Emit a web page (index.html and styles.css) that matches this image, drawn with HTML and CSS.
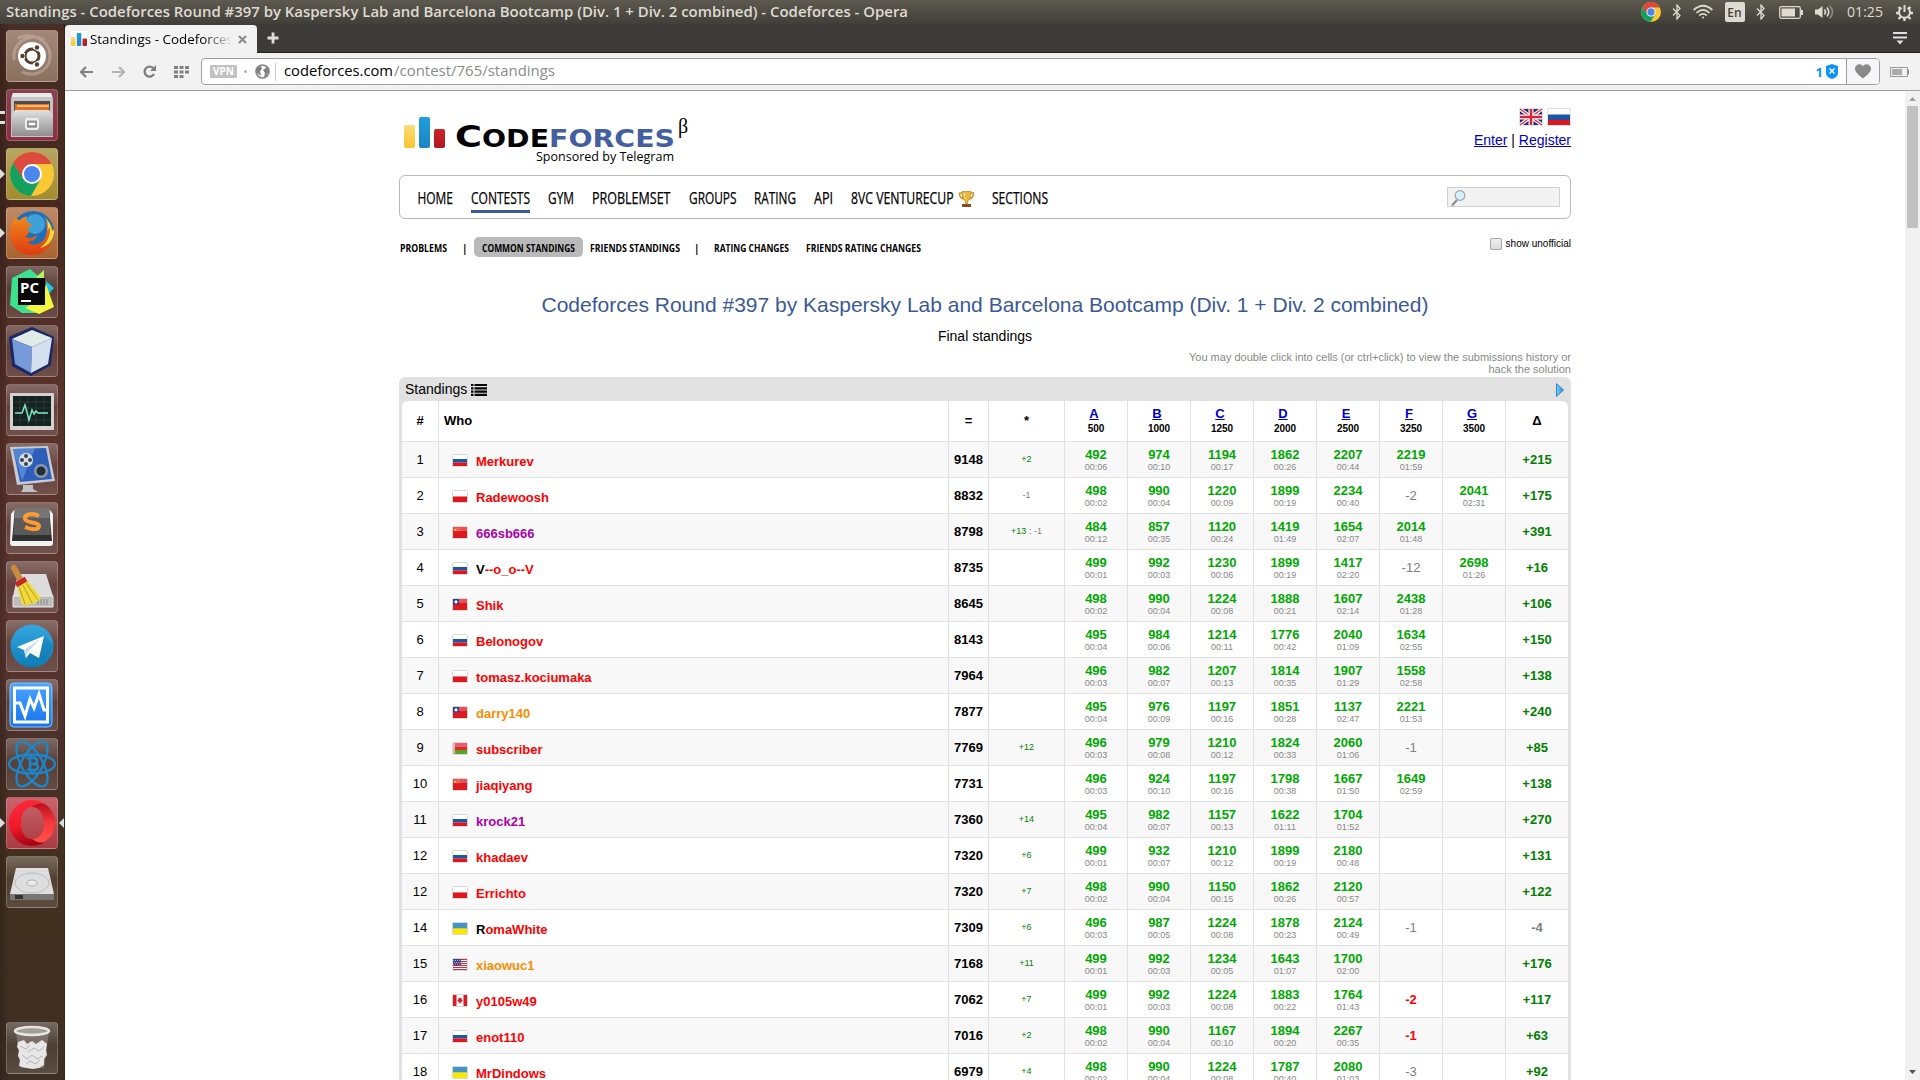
FILE: index.html
```html
<!DOCTYPE html>
<html lang="en">
<head>
<meta charset="utf-8">
<title>Standings - Codeforces</title>
<link rel="stylesheet" href="styles.css">
</head>
<body>
<svg class="defs" width="0" height="0">
  <defs>
    <linearGradient id="gy" x1="0" y1="0" x2="0" y2="1"><stop offset="0" stop-color="#fbdc78"/><stop offset="1" stop-color="#fbc42c"/></linearGradient>
    <linearGradient id="gb" x1="0" y1="0" x2="0" y2="1"><stop offset="0" stop-color="#209ddb"/><stop offset="1" stop-color="#1e85c4"/></linearGradient>
    <linearGradient id="gr" x1="0" y1="0" x2="0" y2="1"><stop offset="0" stop-color="#cb2229"/><stop offset="1" stop-color="#ae1a22"/></linearGradient>
    <linearGradient id="silver" x1="0" y1="0" x2="0" y2="1"><stop offset="0" stop-color="#e0e0e0"/><stop offset="1" stop-color="#8f8f8f"/></linearGradient>
    <linearGradient id="blue" x1="0" y1="0" x2="0" y2="1"><stop offset="0" stop-color="#36a8e0"/><stop offset="1" stop-color="#0a7db8"/></linearGradient>
    <linearGradient id="vm" x1="0" y1="0" x2="0" y2="1"><stop offset="0" stop-color="#4aa5ff"/><stop offset="1" stop-color="#1673ee"/></linearGradient>
    <linearGradient id="opera" x1="0" y1="0" x2=".3" y2="1"><stop offset="0" stop-color="#ff2b3c"/><stop offset=".6" stop-color="#ee1828"/><stop offset="1" stop-color="#a50514"/></linearGradient>
    <linearGradient id="opera2" x1="0" y1="0" x2="0" y2="1"><stop offset="0" stop-color="#b8101c"/><stop offset=".5" stop-color="#f53a3c"/><stop offset="1" stop-color="#ff5048"/></linearGradient>
    <linearGradient id="fox" x1="0" y1="0" x2="0" y2="1"><stop offset="0" stop-color="#f08a1c"/><stop offset="1" stop-color="#de3a12"/></linearGradient>
    <linearGradient id="arrow" x1="0" y1="0" x2="1" y2="0"><stop offset="0" stop-color="#7fd0f8"/><stop offset="1" stop-color="#1f86d8"/></linearGradient>
    <symbol id="f-ru" viewBox="0 0 14 11"><path fill="#fff" d="M0 0h14v4H0z"/><path fill="#1c57a5" d="M0 4h14v3.500H0z"/><path fill="#e0161c" d="M0 7.500h14V11H0z"/></symbol>
    <symbol id="f-pl" viewBox="0 0 14 11"><path fill="#fff" d="M0 0h14v5.500H0z"/><path fill="#e0161c" d="M0 5.500h14V11H0z"/></symbol>
    <symbol id="f-cn" viewBox="0 0 14 11"><path fill="#de1a20" d="M0 0h14v11H0z"/><path fill="#e8505a" d="M0 0h14v4H0z"/><path fill="#fc4" d="M2.500 1.200l.5 1.100 1.200.1-.9.8.3 1.200-1.100-.6-1.100.6.3-1.200-.9-.8 1.200-.1zM5 .8h1v1H5zM5.500 3h1v1h-1z"/></symbol>
    <symbol id="f-tw" viewBox="0 0 14 11"><path fill="#de1a20" d="M0 0h14v11H0z"/><path fill="#e8505a" d="M0 0h14v4H0z"/><path fill="#24409a" d="M0 0h6v5.500H0z"/><circle cx="3" cy="2.800" r="1.600" fill="#fff"/></symbol>
    <symbol id="f-by" viewBox="0 0 14 11"><path fill="#dc2a32" d="M0 0h14v7H0z"/><path fill="#e5606a" d="M0 0h14v4H0z"/><path fill="#5aa61c" d="M0 7h14v4H0z"/><path fill="#f0b0b0" d="M0 0h2v11H0z"/></symbol>
    <symbol id="f-ua" viewBox="0 0 14 11"><path fill="#3f95c6" d="M0 0h14v5.500H0z"/><path fill="#fbe600" d="M0 5.500h14V11H0z"/></symbol>
    <symbol id="f-us" viewBox="0 0 14 11"><path fill="#fff" d="M0 0h14v11H0z"/><path stroke="#d02a3c" d="M0 .5h14M0 2.500h14M0 4.500h14M0 6.500h14M0 8.500h14M0 10.500h14"/><path fill="#3a3f8c" d="M0 0h8v6H0z"/><path stroke="#aab" stroke-dasharray="1 1" d="M0 1.500h8M1 3.500h7M0 5h8"/></symbol>
    <symbol id="f-ca" viewBox="0 0 14 11"><path fill="#fff" d="M0 0h14v11H0z"/><path fill="#dc1a22" d="M0 0h3.500v11H0zM10.500 0H14v11h-3.500zM7 2l.8 1.500 1-.3-.2 1.500 1.400.2-1.500 1.600.2.900H5.300l.2-.9L4 4.900l1.400-.2-.2-1.500 1 .3zM6.700 7h.6v2h-.6z"/></symbol>
    <symbol id="bt" viewBox="0 0 10 16"><path d="M1 4.500l7 7L5 15V1l3 3.500-7 7" fill="none" stroke="#dfdbd2" stroke-width="1.300"/></symbol>
    <symbol id="chrome" viewBox="0 0 44 44"><circle cx="22" cy="22" r="22" fill="#fbc835"/><path fill="#dd4b3e" d="M3 11A22 22 0 0 1 41.100 11L41.500 12H22L12.500 27.500z"/><path fill="#16a05d" d="M3 11A22 22 0 0 0 21 44L30.700 27 22 32 13.300 27z"/><circle cx="22" cy="22" r="10" fill="#fff"/><circle cx="22" cy="22" r="8" fill="#4a86ee"/></symbol>
  </defs>
</svg>

<header class="panel">
  <svg class="panel-title" width="904" height="24"><text x="0" y="16.500" textLength="902" lengthAdjust="spacingAndGlyphs">Standings - Codeforces Round #397 by Kaspersky Lab and Barcelona Bootcamp (Div. 1 + Div. 2 combined) - Codeforces - Opera</text></svg>
  <div class="tray">
    <svg width="20" height="20"><use href="#chrome"/></svg>
    <svg class="t-bt" width="10" height="16"><use href="#bt"/></svg>
    <svg class="t-wifi" width="20" height="14" viewBox="0 0 20 14" fill="none" stroke="#dfdbd2" stroke-width="1.700"><path d="M.6 5Q10-3.500 19.400 5M3.500 7.800Q10 2 16.500 7.800M6.300 10.500Q10 7.200 13.700 10.500"/><circle cx="10" cy="12.400" r="1" fill="#dfdbd2" stroke="none"/></svg>
    <span class="lang">En</span>
    <svg class="t-bt2" width="10" height="16"><use href="#bt"/></svg>
    <svg class="t-bat" width="24" height="13" viewBox="0 0 24 13"><rect x=".7" y=".7" width="20.600" height="11.600" rx="1.500" fill="none" stroke="#dfdbd2" stroke-width="1.300"/><path fill="#dfdbd2" d="M2.500 2.500h13.500v8H2.500zM22 4h2v5h-2z"/></svg>
    <svg class="t-vol" width="20" height="16" viewBox="0 0 20 16"><path fill="#dfdbd2" d="M0 5.500h3L7.500 2v12L3 10.500H0z"/><path d="M9.500 5.500q2 2.500 0 5M12 3.500q3.500 4.500 0 9" fill="none" stroke="#dfdbd2" stroke-width="1.600"/><path d="M14.500 1.500q6 6.500 0 13" fill="none" stroke="#8a877f" stroke-width="1.600"/></svg>
    <svg class="t-clock" width="37" height="24"><text x="0" y="17" textLength="36" lengthAdjust="spacingAndGlyphs">01:25</text></svg>
    <svg class="t-gear" width="17" height="17" viewBox="0 0 17 17" fill="none" stroke="#dfdbd2"><path stroke-width="2" d="M5.500 3.700A5.500 5.500 0 1 0 11.500 3.700M8.500 1v7"/><path stroke-width="2.400" d="M0 9h3M14 9h3M8.500 14v3M2.500 3l2 2M14.500 3l-2 2M2.500 15l2-2M14.500 15l-2-2"/></svg>
  </div>
</header>

<div class="desktop">
  <nav class="launcher">
    <div class="tile ubuntu"><svg viewBox="0 0 52 52"><path d="M8 30C6 12 24 2 38 10M44 22c2 18-14 26-28 20M12 8c14-6 32 2 32 18" fill="none" stroke="#d8c8bc" stroke-width="3" opacity=".4"/><circle cx="26" cy="26" r="14" fill="#fff"/><circle cx="26" cy="26" r="7" fill="none" stroke="#54402f" stroke-width="3"/><path d="M19 26h-4M29.500 20l2-3.500M29.500 32l2 3.500" stroke="#fff" stroke-width="6"/><g fill="#54402f"><circle cx="16.500" cy="26" r="2.200"/><circle cx="31" cy="17.500" r="2.200"/><circle cx="31" cy="34.500" r="2.200"/></g></svg></div>
    <div class="tile files marks"><svg viewBox="0 0 52 52"><path fill="#c4c4c4" d="M7 4h38l2 6v38H5V10z"/><path fill="#e9e9e9" d="M7 4h38l1.500 4h-41z"/><path fill="#4b4b4b" d="M8 12h36v10H8z"/><path fill="#e2711d" d="M9 15h34v7H9z"/><path stroke="#f7d6a8" stroke-width="1.500" d="M11 17h32"/><path fill="url(#silver)" d="M9 21h34l4 5v21H6V26z"/><rect x="20" y="30" width="12" height="10" rx="2" fill="none" stroke="#eee" stroke-width="2"/><rect x="22" y="33" width="8" height="4" fill="#fff" stroke="#666"/></svg></div>
    <div class="tile chrome run"><svg viewBox="0 0 52 52"><use href="#chrome" x="4" y="4" width="44" height="44"/></svg></div>
    <div class="tile firefox run"><svg viewBox="0 0 52 52"><circle cx="27" cy="25" r="21" fill="#1f6fb5"/><circle cx="29" cy="17" r="10" fill="#3ea1d8"/><path fill="url(#fox)" d="M4 27C4 18 7 14 9 10c1 2 3 3 5 3 2-2 4-3 7-4-1 3-1 5 1 7l4 1c-1 3-4 3-5 6 4-1 3 5-2 6 4 4 9 1 12-1-1 5-6 7-10 7 6 5 17 2 19-7 2-5 1-11-1-14 4 3 6 7 6 10l2-2c2 15-8 26-21 26C13 48 4 39 4 27z"/><path fill="#ffd83b" d="M38 10c4 4 5 9 3 14l3-4c1 9-4 17-10 21 10-2 15-11 14-19-1 2-1 2-2 2 0-6-4-11-8-14z"/></svg></div>
    <div class="tile plain"><svg viewBox="0 0 52 52"><path fill="#3ce08e" d="M6 12l18-9 14 12-8 32H16L4 39z"/><path fill="#b5f55a" d="M38 4l-12 11 12 10z"/><path fill="#1cc4e8" d="M40 15l8 7-8 9z"/><path fill="#f3f83c" d="M40 18l8 23-15 7-14-6 18-12z"/><rect x="12" y="12" width="27" height="27" fill="#090909"/><text x="14" y="27" class="pc">PC</text><path fill="#fff" d="M15 34h10v2H15z"/></svg></div>
    <div class="tile plain"><svg viewBox="0 0 52 52"><path fill="#1c2868" stroke="#1c2868" stroke-width="4" stroke-linejoin="round" d="M26 4l20 9-3 26-18 10L8 40 5 13z"/><path fill="#e0ebe8" d="M26 5l20 8-20 9L6 14z"/><path fill="#779bd8" d="M6 14l20 8-1 26-16-9z"/><path fill="#d5e0ee" d="M46 13l-20 9-1 26 17-9z"/></svg></div>
    <div class="tile plain"><svg viewBox="0 0 52 52"><rect x="4" y="9" width="44" height="37" rx="1" fill="#d2d2d0"/><rect x="7" y="12" width="38" height="30" fill="#15221f"/><path stroke="#3a4a46" stroke-width=".6" d="M7 18h38M7 24h38M7 36h38M14 12v30M22 12v30M30 12v30M38 12v30"/><path d="M9 29h7l3-8 4 15 3-10 2 4 2-3 2 2h10" fill="none" stroke="#7fe8c4" stroke-width="1.500"/></svg></div>
    <div class="tile plain"><svg viewBox="0 0 52 52"><path fill="#c8ccd2" d="M4 4l38 -1 7 35-38 4z"/><path fill="#2d5fba" d="M7 6l33 -1 6 31-32 3z"/><path fill="#6ba0e8" d="M7 6l22-1-13 33z" opacity=".6"/><circle cx="20" cy="17" r="7" fill="#d9dde2"/><g fill="#374450"><circle cx="20" cy="13" r="2"/><circle cx="16" cy="17" r="2"/><circle cx="24" cy="17" r="2"/><circle cx="20" cy="21" r="2"/></g><circle cx="35" cy="28" r="7" fill="#8b98a8"/><circle cx="35" cy="28" r="4.500" fill="#222e38"/><path fill="#bfc1c2" d="M17 42h10v4l5 3H15l2-3z"/></svg></div>
    <div class="tile plain"><svg viewBox="0 0 52 52"><path fill="#f1f1f1" d="M5 12L8 8h36l3 4v29q0 3-3 3H7q-3 0-3-3z"/><path fill="#303030" d="M9 6h34l3 33H6z"/><path fill="#5a5a5a" d="M9 6h34l1.500 27H7.500z"/><path fill="#757575" d="M9 6h34l.6 10H8.400z"/><path d="M33 14C25 10 18 13 19 17S33 20 33 24 26 28 19 25" fill="none" stroke="#ff9a30" stroke-width="4"/></svg></div>
    <div class="tile plain"><svg viewBox="0 0 52 52"><path fill="#dcdcdc" d="M12 13h28l7 22H7z"/><path fill="#bdbdbd" stroke="#eee" d="M7 35h40v11H7z"/><path stroke="#888" stroke-width="1" d="M32 38v6M35 38v6M38 38v6M41 38v6"/><path stroke="#c88a3c" stroke-width="6" stroke-linecap="round" d="M8 7l6 11"/><path fill="#f0d93a" d="M11 24l10-5 14 18c-4 5-11 7-19 7z"/><path stroke="#b79a1c" d="M13 26l6 17M17 24l9 18M20 22l12 17"/><path stroke="#c3262b" stroke-width="5" d="M10 24l10-6"/></svg></div>
    <div class="tile plain"><svg viewBox="0 0 52 52"><circle cx="26" cy="26" r="21.500" fill="url(#blue)"/><path fill="#0d6fa3" opacity=".35" d="M38 16l10 10-9 16-17-4z"/><path fill="#fff" d="M11 27l27-11-5 22-9-5-4 5-2-8z"/><path fill="#c5dcea" d="M18 30l16-11-12 13-2 6z"/></svg></div>
    <div class="tile plain"><svg viewBox="0 0 52 52"><rect x="4" y="4" width="42" height="44" rx="4" fill="url(#vm)" stroke="#7ec2ff"/><path d="M8.500 9h33v34h-33z" fill="none" stroke="#fff" stroke-width="3"/><path d="M8 24h6l5 13 5-17 4 9 5-14 5 16h5" fill="none" stroke="#fff" stroke-width="3"/></svg></div>
    <div class="tile dark"><svg viewBox="0 0 52 52" fill="none" stroke="#1c86cc" stroke-width="2.300"><ellipse cx="26" cy="26" rx="23" ry="9.500"/><ellipse cx="26" cy="26" rx="25" ry="10.500" transform="rotate(60 26 26)"/><ellipse cx="26" cy="26" rx="25" ry="10.500" transform="rotate(120 26 26)"/><path stroke-width="2.500" d="M20.500 20h7q3.500 0 3.500 3t-3.500 3H24h4q4 0 4 3t-4 3h-7.500M24 20v12M25 17v3M28 17v3M25 32v3M28 32v3"/></svg></div>
    <div class="tile operat run active"><svg viewBox="0 0 52 52"><path fill="url(#opera)" fill-rule="evenodd" d="M26 3a23 23 0 1 0 0 46 23 23 0 1 0 0-46zM26 10c7 0 12 7 12 16s-5 16-12 16-11-7-11-16 4-16 11-16z"/><path fill="url(#opera2)" d="M26 10c4-4 10-4 14-2 5 4 9 11 9 18s-3 14-9 18c-5 3-10 1-14-2 7 0 12-7 12-16s-5-16-12-16z"/></svg></div>
    <div class="tile dark"><svg viewBox="0 0 52 52"><path fill="#dedede" d="M10 12h32l6 26H4z"/><path fill="#777" d="M4 38h44v6H4z"/><path fill="#333" d="M9 39h8v4H9z"/><ellipse cx="26" cy="27" rx="17" ry="10" fill="none" stroke="#bcbcbc"/><ellipse cx="26" cy="27" rx="5" ry="3" fill="#ececec" stroke="#aaa"/></svg></div>
    <div class="tile dark trash"><svg viewBox="0 0 52 52"><path fill="#a09890" opacity=".5" d="M10 10h33l-5 36H15z"/><path fill="#e6e6e6" d="M12 20l6-2 3 4 5-3 4 3 6-4 5 4-1 6 1 5-3 4v6l-5 3-6 1-7-1-7-2 1-6-2-4 1-6-2-3z"/><path stroke="#b4b4b4" fill="none" d="M14 24l6 3 4-4M22 30l6-4 5 3 5-4M16 33l5 4 5-4 5 4 6-3M20 42l4-3 6 3 4-4"/><ellipse cx="26" cy="9" rx="17" ry="4" fill="#a39e98" stroke="#e6e6e6" stroke-width="2.500"/></svg></div>
  </nav>

  <div class="browser">
    <div class="tabs">
      <div class="tab">
        <svg width="16" height="16" viewBox="0 0 16 16"><path fill="#fff" d="M0 0h16v16H0z"/><rect x="0" y="6" width="4.500" height="9" rx="1" fill="url(#gy)"/><rect x="5.800" y="2" width="4.500" height="13" rx="1" fill="url(#gb)"/><rect x="11.500" y="7.500" width="4.500" height="7.500" rx="1" fill="url(#gr)"/></svg>
        <svg class="tab-text" width="141" height="22"><text x="0" y="16" textLength="143" lengthAdjust="spacingAndGlyphs">Standings - Codeforces</text></svg>
        <svg class="x" width="9" height="9" viewBox="0 0 9 9"><path d="M1 1l7 7M8 1L1 8" stroke="#8c8c8c" stroke-width="2.200"/></svg>
      </div>
      <svg class="plus" width="12" height="12" viewBox="0 0 12 12"><path d="M6 .5v11M.5 6h11" stroke="#dfdfdf" stroke-width="2.800"/></svg>
      <svg class="tabmenu" width="14" height="13" viewBox="0 0 14 13"><path fill="#e0e0e0" d="M0 0h14v2H0zM0 4.500h14v2H0zM3.500 8.500h7L7 12.500z"/></svg>
    </div>
    <div class="toolbar">
      <svg class="nav-ic" width="15" height="12" viewBox="0 0 15 12"><path d="M14 6H3M7 1L2 6l5 5" fill="none" stroke="#808080" stroke-width="2.200"/></svg>
      <svg class="nav-ic fwd" width="15" height="12" viewBox="0 0 15 12"><path d="M1 6h11M8 1l5 5-5 5" fill="none" stroke="#b5b5b5" stroke-width="2.200"/></svg>
      <svg class="nav-ic" width="15" height="14" viewBox="0 0 15 14"><path d="M11.300 3.200A5 5 0 1 0 12 9" fill="none" stroke="#808080" stroke-width="2.400"/><path d="M14 0v6H8z" fill="#808080"/></svg>
      <svg class="nav-ic grid" width="15" height="12" viewBox="0 0 15 12"><path fill="#808080" d="M0 0h4v3H0zM5.500 0h4v3h-4zM11 0h4v3h-4zM0 4.500h4v3H0zM5.500 4.500h4v3h-4zM11 4.500h4v3h-4zM0 9h4v3H0zM5.500 9h4v3h-4z"/></svg>
      <div class="address">
        <span class="vpn">VPN</span><span class="dot"></span>
        <svg width="15" height="15" viewBox="0 0 15 15"><circle cx="7.500" cy="7.500" r="6.500" fill="none" stroke="#808080" stroke-width="1.600"/><path fill="#808080" d="M2 4l4-2 1 3-2 2 1 5-4-3zM8 6l4-3 2 4-3 5-2 1 1-4z"/></svg>
        <span class="sep"></span>
        <svg class="url" width="272" height="24"><text x="0" y="16" textLength="109" lengthAdjust="spacingAndGlyphs" class="host">codeforces.com</text><text x="110" y="16" textLength="161" lengthAdjust="spacingAndGlyphs">/contest/765/standings</text></svg>
        <span class="one">1</span>
        <svg class="shield" width="12" height="15" viewBox="0 0 12 15"><path fill="#0a93fa" d="M6 0l6 2v7q0 4-6 6-6-2-6-6V2z"/><path d="M3.500 4.500l5 5M8.500 4.500l-5 5" stroke="#fff" stroke-width="1.500"/></svg>
        <span class="heart"><svg width="16" height="15" viewBox="0 0 16 15"><path fill="#8a8a8a" d="M8 14.500C2 10 0 7.500 0 4.300 0 .5 5.500-1.500 8 2.200 10.500-1.500 16 .5 16 4.300 16 7.500 14 10 8 14.500z"/></svg></span>
      </div>
      <svg class="batt" width="19" height="10" viewBox="0 0 19 10"><path d="M.5.500h17v9H.5z" fill="none" stroke="#999"/><path fill="#aaa" d="M2 2h10v6H2z"/><path fill="#888" d="M17.500 2.500H19v5h-1.500z"/></svg>
    </div>

    <div class="viewport">
      <main class="page">
        <div class="top">
          <svg class="logo" width="300" height="56" viewBox="400 112 300 56">
            <rect x="404" y="125" width="11" height="23" rx="2" fill="url(#gy)"/><rect x="419" y="117" width="11" height="31" rx="2" fill="url(#gb)"/><rect x="434" y="129" width="11" height="19" rx="2" fill="url(#gr)"/>
            <text class="brand" x="455" y="147" font-size="30.500" textLength="27" lengthAdjust="spacingAndGlyphs">C</text>
            <text class="brand" x="482" y="147" font-size="25.500" textLength="67" lengthAdjust="spacingAndGlyphs">ODE</text>
            <text class="brand forces" x="549" y="147" font-size="25.500" textLength="126" lengthAdjust="spacingAndGlyphs">FORCES</text>
            <text class="beta" x="678" y="133">β</text>
            <text class="sponsor" x="536" y="161" textLength="138" lengthAdjust="spacingAndGlyphs">Sponsored by Telegram</text>
          </svg>
          <div class="login">
            <div class="langs">
              <svg class="bigflag" width="24" height="18" viewBox="0 0 24 18"><path fill="#232a7c" d="M1 1h22v16H1z"/><path d="M1 1l22 16M23 1L1 17" stroke="#fff" stroke-width="3.500"/><path d="M1 1l22 16M23 1L1 17" stroke="#d8243a" stroke-width="1.200"/><path d="M12 1v16M1 9h22" stroke="#fff" stroke-width="5"/><path d="M12 1v16M1 9h22" stroke="#d8243a" stroke-width="2.600"/></svg>
              <svg class="bigflag" width="24" height="18" viewBox="0 0 24 18"><path fill="#fff" d="M1 1h22v5.500H1z"/><path fill="#1c57a5" d="M1 6.500h22V12H1z"/><path fill="#e0161c" d="M1 12h22v5H1z"/></svg>
            </div>
            <div><a>Enter</a> | <a>Register</a></div>
          </div>
        </div>
        <nav class="menu">
          <svg width="36" height="20"><text x=".5" y="16" textLength="35.500" lengthAdjust="spacingAndGlyphs">HOME</text></svg>
          <svg class="current" width="59" height="23"><text y="16" textLength="59" lengthAdjust="spacingAndGlyphs">CONTESTS</text></svg>
          <svg width="26" height="20"><text y="16" textLength="26" lengthAdjust="spacingAndGlyphs">GYM</text></svg>
          <svg width="78.500" height="20"><text y="16" textLength="78.500" lengthAdjust="spacingAndGlyphs">PROBLEMSET</text></svg>
          <svg width="47.500" height="20"><text y="16" textLength="47.500" lengthAdjust="spacingAndGlyphs">GROUPS</text></svg>
          <svg width="42" height="20"><text y="16" textLength="42" lengthAdjust="spacingAndGlyphs">RATING</text></svg>
          <svg width="19" height="20"><text y="16" textLength="19" lengthAdjust="spacingAndGlyphs">API</text></svg>
          <svg width="123" height="20"><text y="16" textLength="102.500" lengthAdjust="spacingAndGlyphs">8VC VENTURECUP</text><g transform="translate(107.500 3)"><path d="M4 2H1q0 5 4 6M12 2h3q0 5-4 6" fill="none" stroke="#c8962a" stroke-width="1.500"/><path fill="#e9b93c" stroke="#b5821e" stroke-width=".7" d="M3.500.5h9q0 8-3.500 9.500v2.500H7V10Q3.500 8.500 3.500.5z"/><path fill="#8c4a1c" d="M3.500 13h9v3h-9z"/><path stroke="#fff0a8" d="M6 2q0 4 1 6"/></g></svg>
          <svg width="56" height="20"><text y="16" textLength="56" lengthAdjust="spacingAndGlyphs">SECTIONS</text></svg>
          <div class="search"><svg width="15" height="16" viewBox="0 0 15 16"><path d="M6 10L1 15.500" stroke="#8d8d8d" stroke-width="2.200"/><circle cx="9" cy="5.500" r="4.800" fill="#d8f0fb" stroke="#9aa4aa" stroke-width="1.200"/></svg></div>
        </nav>
        <div class="second">
          <nav class="submenu">
            <svg width="48" height="20"><text x="1" y="15" textLength="47" lengthAdjust="spacingAndGlyphs">PROBLEMS</text></svg>
            <b class="bar b1">|</b>
            <span class="pill"><svg width="93" height="20"><text y="15" textLength="93" lengthAdjust="spacingAndGlyphs">COMMON STANDINGS</text></svg></span>
            <svg class="fs" width="90" height="20"><text y="15" textLength="90" lengthAdjust="spacingAndGlyphs">FRIENDS STANDINGS</text></svg>
            <b class="bar b2">|</b>
            <svg class="rc" width="76" height="20"><text y="15" textLength="75" lengthAdjust="spacingAndGlyphs">RATING CHANGES</text></svg>
            <svg class="frc" width="115" height="20"><text y="15" textLength="115" lengthAdjust="spacingAndGlyphs">FRIENDS RATING CHANGES</text></svg>
          </nav>
          <div class="unofficial"><span class="check"></span>show unofficial</div>
        </div>
        <h1>Codeforces Round #397 by Kaspersky Lab and Barcelona Bootcamp (Div. 1 + Div. 2 combined)</h1>
        <div class="final">Final standings</div>
        <div class="note">You may double click into cells (or ctrl+click) to view the submissions history or<br>hack the solution</div>
        <section class="datatable">
          <div class="caption"><span>Standings</span><svg class="list" width="16" height="12" viewBox="0 0 16 12"><path d="M0 1h2.500M0 4.300h2.500M0 7.600h2.500M0 10.900h2.500M3.500 1H16M3.500 4.300H16M3.500 7.600H16M3.500 10.900H16" stroke="#000" stroke-width="2.200"/></svg><svg class="next" width="8" height="14" viewBox="0 0 8 14"><path d="M.5.500L7.500 7l-7 6.500z" fill="url(#arrow)" stroke="#2a86cc"/></svg></div>
          <div class="rows" id="rows"></div>
        </section>
      </main>
      <div class="scroll"><svg width="7" height="4" viewBox="0 0 7 4"><path fill="#a0a0a0" d="M3.500 0L7 4H0z"/></svg><div class="thumb"></div><svg class="down" width="7" height="4" viewBox="0 0 7 4"><path fill="#505050" d="M3.500 4L7 0H0z"/></svg></div>
    </div>
  </div>
</div>
<script src="standings.js"></script>
</body>
</html>
```
FILE: styles.css
```css
* { box-sizing: border-box; }
body { margin: 0; width: 1920px; height: 1080px; overflow: hidden; background: #fff; color: #000; font-family: "Liberation Sans", Arial, sans-serif; font-size: 13px; }
svg { display: block; flex: none; overflow: visible; }
.defs { position: absolute; }

.panel { height: 24px; display: flex; justify-content: space-between; background: linear-gradient(#5c5950, #5a574e 10%, #403f3a); padding-left: 6px; padding-right: 7.5px; }
.panel-title text { font: 600 13.5px "Open Sans", sans-serif; fill: #dfdbd2; }
.tray { display: flex; align-items: center; }
.t-bt { margin-left: 11px; }
.t-wifi { margin-left: 11px; }
.lang { margin-left: 12px; width: 20px; height: 20px; border-radius: 2px; background: #dfdbd2; color: #45433d; font: 600 12px/21px "Open Sans", sans-serif; text-align: center; }
.t-bt2 { margin-left: 11px; }
.t-bat { margin-left: 13px; }
.t-vol { margin-left: 12px; }
.t-clock { margin-left: 12px; }
.t-clock text { font: 14px "Open Sans", sans-serif; fill: #dfdbd2; }
.t-gear { margin-left: 12px; }

.desktop { display: flex; height: 1056px; }
.launcher { width: 65px; flex: none; display: flex; flex-direction: column; gap: 7px; padding: 6px 7px 6px 6px; background: linear-gradient(90deg, rgba(0,0,0,.2), transparent 10px), linear-gradient(#492e25, #45291f 18%, #5a322c 35%, #5c3630 58%, #4a3029 68%, #43301f 80%, #3e2f25); border-right: 1px solid #32231e; }
.tile { position: relative; width: 52px; height: 52px; border-radius: 4px; border: 1px solid rgba(255,255,255,.2); background: linear-gradient(rgba(255,255,255,.28), rgba(255,255,255,.08) 45%, rgba(255,255,255,.14)); }
.tile svg { width: 52px; height: 52px; margin: -1px; }
.ubuntu { background: linear-gradient(#a3887a, #8a705e); }
.files { background: linear-gradient(#854450, #8d3042); }
.chrome { background: linear-gradient(#b8a564, #a18c2d); }
.firefox { background: linear-gradient(#c08a68, #a9632f); }
.operat { background: linear-gradient(#c9636b, #a83c42); }
.run::before, .active::after { content: ""; position: absolute; top: 20px; border: 5px solid transparent; }
.run::before { left: -7px; border-left-color: #ddd; border-right: 0; }
.active::after { right: -7px; border-right-color: #ddd; border-left: 0; }
.marks::before { content: ""; position: absolute; left: -7px; top: 21px; width: 5px; height: 7px; border: solid #ddd; border-width: 3px 0; }
.trash { margin-top: auto; }
.pc { font: bold 15px "Open Sans", sans-serif; fill: #fff; }

.browser { flex: 1; display: flex; flex-direction: column; }
.tabs { height: 29px; flex: none; display: flex; align-items: center; background: #3c3b37; border-bottom: 1px solid #23221f; }
.tab { align-self: flex-end; width: 192px; height: 28px; margin-bottom: -1px; background: #f2f2f2; border-radius: 4px 4px 0 0; display: flex; align-items: center; padding-left: 6px; }
.tab-text { margin-left: 3px; -webkit-mask-image: linear-gradient(90deg, #000 112px, transparent 143px); mask-image: linear-gradient(90deg, #000 112px, transparent 143px); }
.tab-text text { font: 13.5px "Open Sans", sans-serif; }
.x { margin-left: 7px; }
.plus { margin-left: 10px; }
.tabmenu { margin-left: auto; margin-right: 13px; }
.toolbar { height: 38px; flex: none; display: flex; align-items: center; background: #f2f2f2; border-bottom: 1px solid #a0a0a0; padding-left: 14px; }
.nav-ic { margin-right: 17px; }
.fwd { margin-right: 16px; }
.nav-ic.grid { margin-right: 12px; }
.address { width: 1679px; height: 27px; display: flex; align-items: center; border: 1px solid #a0a0a0; border-radius: 4px; background: #fff; padding-left: 8px; }
.vpn { width: 27px; height: 13px; background: #c2c2c2; color: #fff; border-radius: 1px; font: bold 10px/13px "Open Sans", sans-serif; text-align: center; }
.dot { width: 3px; height: 3px; border-radius: 2px; background: #b5b5b5; margin: 0 8px 0 7px; }
.sep { width: 1px; height: 18px; background: #ccc; margin: 0 8px 0 5px; }
.url text { font: 14px "Open Sans", sans-serif; fill: #8b8b8b; }
.url .host { fill: #000; }
.one { margin-left: auto; color: #0a93fa; font: bold 13px "Open Sans", sans-serif; }
.shield { margin: 0 8px 0 3px; }
.heart { width: 33px; height: 25px; border-left: 1px solid #a0a0a0; background: #f6f6f8; border-radius: 0 3px 3px 0; display: flex; align-items: center; justify-content: center; }
.batt { margin-left: 10px; }

.viewport { flex: 1; min-height: 0; display: flex; overflow: hidden; }
.page { width: 1172px; margin-left: 334px; flex: none; }
.scroll { margin-left: auto; width: 15px; background: #f1f1f1; display: flex; flex-direction: column; align-items: center; padding: 6px 0; }
.thumb { width: 11px; height: 122px; margin-top: 5px; background: #c1c1c1; }
.down { margin-top: auto; }

.top { display: flex; justify-content: space-between; height: 84px; padding-top: 17px; }
.logo { margin: 4px 0 0 1px; }
.brand { font-family: "DejaVu Sans", sans-serif; font-weight: bold; }
.forces { fill: #445fa0; }
.beta { font: 20px "Liberation Serif", serif; }
.sponsor { font: 13px "Open Sans", sans-serif; }
.login { font-size: 14px; line-height: 18px; text-align: right; }
.langs { display: flex; justify-content: flex-end; gap: 4px; margin-bottom: 5px; }
.bigflag { border-radius: 2px; box-shadow: 0 0 2px #999 inset; }
a { color: #0000cc; text-decoration: underline; }

.menu { height: 44px; border: 1px solid #b9b9b9; border-radius: 6px; display: flex; gap: 18px; padding: 12px 10px 0 17px; }
.menu text { font: 16px "Open Sans", sans-serif; stroke: #000; stroke-width: .25px; }
.current { border-bottom: 3px solid #3b5998; }
.menu .current { height: 25px; }
.search { margin-left: auto; margin-top: -1px; width: 113px; height: 20px; border: 1px solid #d0d0d0; background: #f2f2f2; padding: 2px 3px; }
.second { display: flex; justify-content: space-between; margin-top: 18px; height: 20px; }
.submenu { display: flex; align-items: center; height: 20px; font-size: 11px; }
.submenu text { font: bold 11px "Open Sans", sans-serif; }
.bar { font: bold 10px/20px "Open Sans", sans-serif; width: 4px; text-align: center; }
.b1 { margin: 1px 8px 0 15px; }
.pill { background: #b9b9b9; border-radius: 5px; padding: 0 8px; }
.fs { margin-left: 7px; }
.b2 { margin: 1px 16px 0 14px; }
.frc { margin-left: 15.5px; }
.unofficial { display: flex; align-items: center; height: 12px; font-size: 10px; }
.check { width: 12px; height: 12px; border: 1px solid #a6a6a6; border-radius: 2px; background: linear-gradient(#eee, #dcdcdc); margin: 2px 4px 0 0; }
h1 { margin: 34px 0 0; height: 27px; font-size: 21px; line-height: 27px; font-weight: normal; text-align: center; color: #3b5998; white-space: nowrap; }
.final { margin-top: 8px; font-size: 14px; line-height: 20px; text-align: center; }
.note { margin-top: 5px; font-size: 11px; line-height: 12px; text-align: right; color: #888; }

.datatable { margin-top: 2px; background: #e1e1e1; border-radius: 6px; padding: 0 3px; }
.caption { height: 24px; display: flex; align-items: center; font-size: 14px; line-height: 24px; padding: 0 4px 0 3px; gap: 4px; }
.list { margin-top: 1px; }
.next { margin-left: auto; margin-top: 1px; }
.rows { background: #fff; border-radius: 6px 6px 0 0; overflow: hidden; }
.row { display: grid; grid-template-columns: 37px 510px 40px 76px repeat(7, 63px) 62px; grid-template-rows: 100%; height: 36px; border-bottom: 1px solid #e1e1e1; }
.row:nth-child(even) { background: #f8f8f8; }
.head { height: 41px; font-weight: bold; }
.cell { border-right: 1px solid #e1e1e1; text-align: center; line-height: 35px; }
.cell:last-child { border-right: 0; }
.head .cell { line-height: 40px; }
.head .who { padding-left: 5px; text-align: left; }
.head .prob { padding-top: 5px; line-height: 15px; }
.prob small { display: block; font-size: 10px; line-height: 15px; }
.prob a { margin-right: 4px; }
.total { font-weight: bold; }
.user { display: flex; align-items: center; text-align: left; padding-left: 13px; font-weight: bold; }
.user span { line-height: 15px; padding-top: 4px; }
.user svg { width: 16px; height: 13px; padding: 1px; border-radius: 2px; background: #d8d8d8; margin: 2px 8px 0 0; }
.red { color: #ff0000; }
.orange { color: #ff8c00; }
.violet { color: #aa00aa; }
.black { color: #000; }
.hack { font-size: 9px; line-height: 34px; color: #555; }
.good { color: #008000; }
.bad { color: #808080; }
.solved { padding-top: 5px; line-height: 15px; font-weight: bold; color: #00a900; }
.solved small { display: block; font-size: 9px; line-height: 10px; font-weight: normal; color: #888; }
.fail { color: #808080; }
.hard { color: #ff0000; font-weight: bold; }
.up { color: #008000; font-weight: bold; }
.downd { color: #808080; font-weight: bold; }
```
FILE: standings.js
```js
// rank | flag | handle | colour | total | hacks | A..G (points time) | rating change
const data = `1|ru|Merkurev|red|9148|+2|492 00:06|974 00:10|1194 00:17|1862 00:26|2207 00:44|2219 01:59||+215
2|pl|Radewoosh|red|8832|-1|498 00:02|990 00:04|1220 00:09|1899 00:19|2234 00:40|-2|2041 02:31|+175
3|cn|666sb666|violet|8798|+13 : -1|484 00:12|857 00:35|1120 00:24|1419 01:49|1654 02:07|2014 01:48||+391
4|ru|V--o_o--V|legend|8735||499 00:01|992 00:03|1230 00:06|1899 00:19|1417 02:20|-12|2698 01:26|+16
5|tw|Shik|red|8645||498 00:02|990 00:04|1224 00:08|1888 00:21|1607 02:14|2438 01:28||+106
6|ru|Belonogov|red|8143||495 00:04|984 00:06|1214 00:11|1776 00:42|2040 01:09|1634 02:55||+150
7|pl|tomasz.kociumaka|red|7964||496 00:03|982 00:07|1207 00:13|1814 00:35|1907 01:29|1558 02:58||+138
8|tw|darry140|orange|7877||495 00:04|976 00:09|1197 00:16|1851 00:28|1137 02:47|2221 01:53||+240
9|by|subscriber|red|7769|+12|496 00:03|979 00:08|1210 00:12|1824 00:33|2060 01:06|-1||+85
10|cn|jiaqiyang|red|7731||496 00:03|924 00:10|1197 00:16|1798 00:38|1667 01:50|1649 02:59||+138
11|ru|krock21|violet|7360|+14|495 00:04|982 00:07|1157 00:13|1622 01:11|1704 01:52|||+270
12|ru|khadaev|red|7320|+6|499 00:01|932 00:07|1210 00:12|1899 00:19|2180 00:48|||+131
12|pl|Errichto|red|7320|+7|498 00:02|990 00:04|1150 00:15|1862 00:26|2120 00:57|||+122
14|ua|RomaWhite|legend|7309|+6|496 00:03|987 00:05|1224 00:08|1878 00:23|2124 00:49|-1||-4
15|us|xiaowuc1|orange|7168|+11|499 00:01|992 00:03|1234 00:05|1643 01:07|1700 02:00|||+176
16|ca|y0105w49|red|7062|+7|499 00:01|992 00:03|1224 00:08|1883 00:22|1764 01:43|-2!||+117
17|ru|enot110|red|7016|+2|498 00:02|990 00:04|1167 00:10|1894 00:20|2267 00:35|-1!||+63
18|ua|MrDindows|red|6979|+4|498 00:02|990 00:04|1224 00:08|1787 00:40|2080 01:03|-3||+92`;

const cell = (cls, html) => `<div class="cell ${cls}">${html}</div>`;

function handle(name, color) {
  if (color !== 'legend') return `<span class="${color}">${name}</span>`;
  return `<span class="black">${name[0]}</span><span class="red">${name.slice(1)}</span>`;
}

function problem(v) {
  if (!v) return cell('', '');
  if (v[0] === '-') return cell(v.endsWith('!') ? 'hard' : 'fail', v.replace('!', ''));
  const [points, time] = v.split(' ');
  return cell('solved', `${points}<small>${time}</small>`);
}

const hacks = v => v.split(' : ').map(h => `<span class="${h[0] === '+' ? 'good' : 'bad'}">${h}</span>`).join(' : ');

const scores = { A: 500, B: 1000, C: 1250, D: 2000, E: 2500, F: 3250, G: 3500 };
let out = '<div class="row head">' + cell('', '#') + cell('who', 'Who') + cell('', '=') + cell('', '*')
  + Object.entries(scores).map(([k, s]) => cell('prob', `<a>${k}</a><small>${s}</small>`)).join('')
  + cell('', 'Δ') + '</div>';

for (const line of data.split('\n')) {
  const f = line.split('|');
  out += '<div class="row">' + cell('', f[0])
    + cell('user', `<svg viewBox="0 0 14 11"><use href="#f-${f[1]}"/></svg>${handle(f[2], f[3])}`)
    + cell('total', f[4]) + cell('hack', hacks(f[5]))
    + f.slice(6, 13).map(problem).join('')
    + cell(f[13][0] === '+' ? 'up' : 'downd', f[13]) + '</div>';
}
document.getElementById('rows').innerHTML = out;
```
